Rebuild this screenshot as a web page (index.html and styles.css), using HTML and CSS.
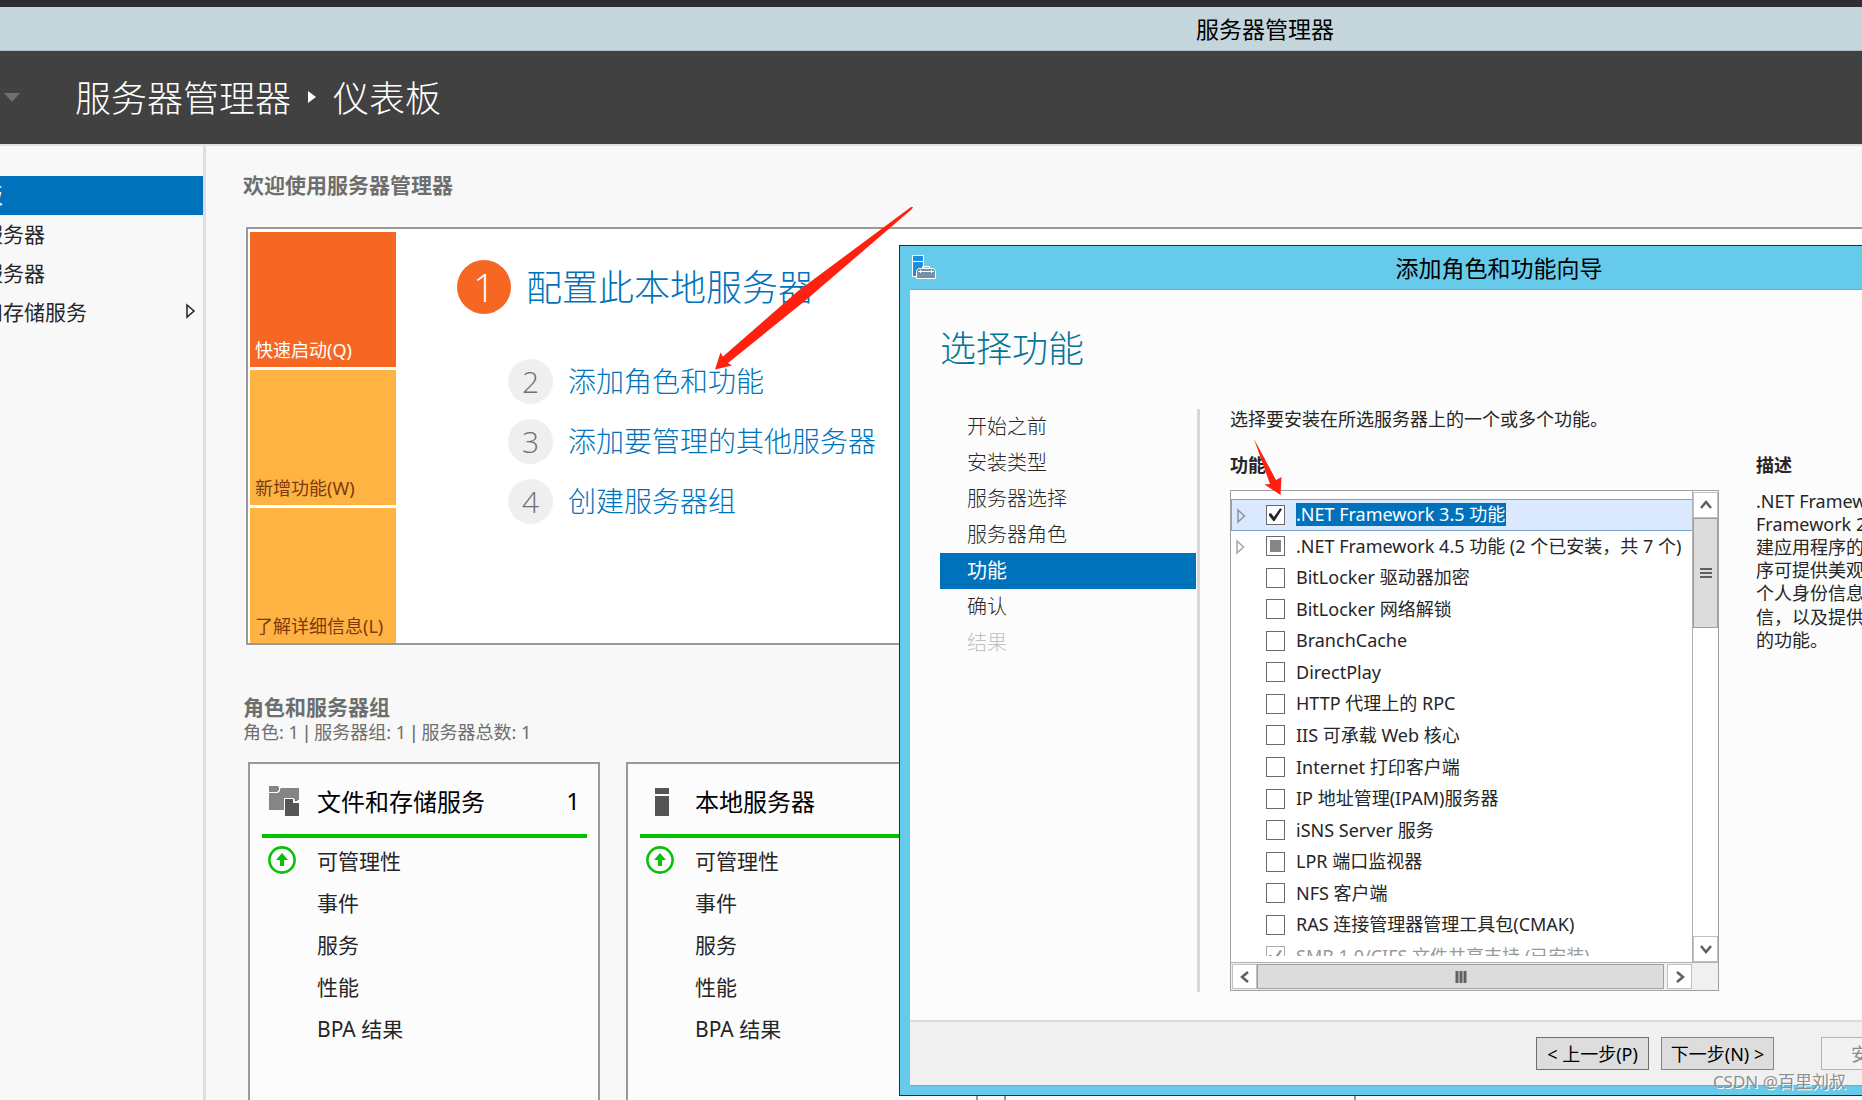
FILE: index.html
```html
<!DOCTYPE html>
<html lang="zh-CN">
<head>
<meta charset="utf-8">
<title>服务器管理器</title>
<link rel="stylesheet" href="styles.css">
</head>
<body>
<div class="desktop">
  <div class="titlebar">服务器管理器</div>
  <header class="banner">
    <svg class="banner-drop" width="16" height="10" viewBox="0 0 16 10"><path d="M0 0h16L8 9z" fill="#707070"/></svg>
    <nav class="crumbs">
      <span>服务器管理器</span>
      <svg width="8" height="14" viewBox="0 0 8 14"><path d="M0 1l8 6-8 6z" fill="#fff"/></svg>
      <span>仪表板</span>
    </nav>
  </header>
  <div class="workspace">
    <nav class="sidebar">
      <ul>
        <li class="current"><a href="#">仪表板</a></li>
        <li><a href="#">本地服务器</a></li>
        <li><a href="#">所有服务器</a></li>
        <li><a href="#">文件和存储服务</a><svg width="10" height="16" viewBox="0 0 10 16"><path d="M1 2l7 6-7 6z" fill="none" stroke="#222" stroke-width="1.5"/></svg></li>
      </ul>
    </nav>
    <main class="main">
      <h2 class="section-title">欢迎使用服务器管理器</h2>
      <section class="welcome">
        <div class="tiles">
          <button class="tile tile-hot">快速启动(Q)</button>
          <button class="tile">新增功能(W)</button>
          <button class="tile">了解详细信息(L)</button>
        </div>
        <div class="steps">
          <div class="step step-main"><span class="num">1</span><a href="#">配置此本地服务器</a></div>
          <div class="step"><span class="num">2</span><a href="#">添加角色和功能</a></div>
          <div class="step"><span class="num">3</span><a href="#">添加要管理的其他服务器</a></div>
          <div class="step"><span class="num">4</span><a href="#">创建服务器组</a></div>
        </div>
      </section>
      <h2 class="section-title groups-title">角色和服务器组</h2>
      <p class="section-sub">角色: 1 <span class="bar">|</span> 服务器组: 1 <span class="bar">|</span> 服务器总数: 1</p>
      <div class="cards">
        <article class="card">
          <div class="card-head">
            <span class="card-icon"><svg width="30" height="30" viewBox="0 0 30 30"><path d="M0 0h9l1 2v2l-2 2H0zM0 7h9l2-2V3l1-1h18v12h-3l-3-2h-9v12H0z" fill="#858585"/><path d="M16 13h8v4h6v13H16z" fill="#555"/><path d="M26 13v2h3z" fill="#555"/></svg></span>
            <h3>文件和存储服务</h3><span class="count">1</span>
          </div>
          <ul>
            <li><span class="ok"><svg width="28" height="28" viewBox="0 0 28 28"><circle cx="14" cy="14" r="12.6" fill="#fff" stroke="#0abf0a" stroke-width="2.6"/><path d="M14 7l6 7h-4v6h-4v-6H8z" fill="#0abf0a"/></svg></span>可管理性</li>
            <li>事件</li><li>服务</li><li>性能</li><li>BPA 结果</li>
          </ul>
        </article>
        <article class="card">
          <div class="card-head">
            <span class="card-icon"><svg width="30" height="30" viewBox="0 0 30 30"><path d="M8 2h14v6H8zM8 10h14v20H8z" fill="#555"/></svg></span>
            <h3>本地服务器</h3>
          </div>
          <ul>
            <li><span class="ok"><svg width="28" height="28" viewBox="0 0 28 28"><circle cx="14" cy="14" r="12.6" fill="#fff" stroke="#0abf0a" stroke-width="2.6"/><path d="M14 7l6 7h-4v6h-4v-6H8z" fill="#0abf0a"/></svg></span>可管理性</li>
            <li>事件</li><li>服务</li><li>性能</li><li>BPA 结果</li>
          </ul>
        </article>
        <article class="card"></article>
      </div>
    </main>
  </div>

  <div class="dialog" role="dialog" aria-label="添加角色和功能向导">
    <div class="dialog-bar">
      <svg class="dialog-icon" width="24" height="24" viewBox="0 0 24 24"><path d="M.5.5h11v21H.5z" fill="#1e8fe0" stroke="#fff"/><path d="M0 6.500h12" stroke="#fff"/><path d="M10.500 13.500v-2h7v2" fill="none" stroke="#fff"/><path d="M4.500 15.500l2-2h15l2 2v8h-19z" fill="#7391aa" stroke="#fff"/><path d="M6 16.500h16M8.500 15v3M19.500 15v3" stroke="#fff"/></svg>
      <span class="dialog-title">添加角色和功能向导</span>
    </div>
    <div class="dialog-body">
      <div class="dialog-content">
        <h1>选择功能</h1>
        <div class="columns">
          <ol class="pages">
            <li>开始之前</li><li>安装类型</li><li>服务器选择</li><li>服务器角色</li>
            <li class="active">功能</li><li>确认</li><li class="off">结果</li>
          </ol>
          <div class="features">
            <p>选择要安装在所选服务器上的一个或多个功能。</p>
            <h4>功能</h4>
            <div class="listbox">
              <div class="view">
                <ul class="rows">
                  <li class="picked"><svg class="exp" width="9" height="16" viewBox="0 0 9 16"><path d="M1 2l6.500 6L1 14z" fill="none" stroke="#8a93a5" stroke-width="1.500"/></svg><input type="checkbox" id="f1" checked><label for="f1">.NET Framework 3.5 功能</label></li>
                  <li><svg class="exp" width="9" height="16" viewBox="0 0 9 16"><path d="M1 2l6.500 6L1 14z" fill="none" stroke="#a6a6a6" stroke-width="1.500"/></svg><input type="checkbox" id="f2" class="partial"><label for="f2">.NET Framework 4.5 功能 (2 个已安装<span class="comma">，</span>共 7 个)</label></li>
                  <li><input type="checkbox" id="f3"><label for="f3">BitLocker 驱动器加密</label></li>
                  <li><input type="checkbox" id="f4"><label for="f4">BitLocker 网络解锁</label></li>
                  <li><input type="checkbox" id="f5"><label for="f5">BranchCache</label></li>
                  <li><input type="checkbox" id="f6"><label for="f6">DirectPlay</label></li>
                  <li><input type="checkbox" id="f7"><label for="f7">HTTP 代理上的 RPC</label></li>
                  <li><input type="checkbox" id="f8"><label for="f8">IIS 可承载 Web 核心</label></li>
                  <li><input type="checkbox" id="f9"><label for="f9">Internet 打印客户端</label></li>
                  <li><input type="checkbox" id="f10"><label for="f10">IP 地址管理(IPAM)服务器</label></li>
                  <li><input type="checkbox" id="f11"><label for="f11">iSNS Server 服务</label></li>
                  <li><input type="checkbox" id="f12"><label for="f12">LPR 端口监视器</label></li>
                  <li><input type="checkbox" id="f13"><label for="f13">NFS 客户端</label></li>
                  <li><input type="checkbox" id="f14"><label for="f14">RAS 连接管理器管理工具包(CMAK)</label></li>
                  <li class="locked"><input type="checkbox" id="f15" checked disabled><label for="f15">SMB 1.0/CIFS 文件共享支持 (已安装)</label></li>
                </ul>
              </div>
              <div class="vbar">
                <button aria-label="向上"><svg width="14" height="10" viewBox="0 0 14 10"><path d="M2 8l5-6 5 6" fill="none" stroke="#606060" stroke-width="2.500"/></svg></button>
                <div class="thumb"><svg width="12" height="12" viewBox="0 0 12 12"><path d="M0 2h12M0 6h12M0 10h12" stroke="#606060" stroke-width="2"/></svg></div>
                <button class="end" aria-label="向下"><svg width="14" height="10" viewBox="0 0 14 10"><path d="M2 2l5 6 5-6" fill="none" stroke="#606060" stroke-width="2.500"/></svg></button>
              </div>
              <div class="hbar">
                <button aria-label="向左"><svg width="10" height="14" viewBox="0 0 10 14"><path d="M8 2L2 7l6 5" fill="none" stroke="#606060" stroke-width="2.500"/></svg></button>
                <div class="thumb"><svg width="12" height="12" viewBox="0 0 12 12"><path d="M2 0v12M6 0v12M10 0v12" stroke="#606060" stroke-width="3"/></svg></div>
                <button aria-label="向右"><svg width="10" height="14" viewBox="0 0 10 14"><path d="M2 2l6 5-6 5" fill="none" stroke="#606060" stroke-width="2.500"/></svg></button>
              </div>
            </div>
          </div>
          <div class="about">
            <h4>描述</h4>
            <p>.NET Framework<br>Framework 2.0<br>建应用程序的<br>序可提供美观<br>个人身份信息<br>信<span class="comma">，</span>以及提供<br>的功能。</p>
          </div>
        </div>
      </div>
      <footer class="dialog-foot">
        <button class="btn">&lt; 上一步(P)</button>
        <button class="btn primary">下一步(N) &gt;</button>
        <button class="btn idle" disabled>安装(I)</button>
      </footer>
    </div>
  </div>

  <svg class="marks" width="1400" height="520" viewBox="0 0 1400 520">
    <path d="M911 207L913 207L912 209L806 300L728 363L732 365.500L715 369.500L720.500 352.500L723 356.500L798 291z" fill="#ff2010"/>
    <path d="M1254 439L1276 480L1281.500 477L1280.500 495L1264.500 484.500L1270 484z" fill="#ff2010"/>
  </svg>
  <div class="watermark">CSDN @百里刘叔</div>
</div>
</body>
</html>
```
FILE: styles.css
```css
* { box-sizing: border-box; margin: 0; padding: 0; }
html, body { height: 100%; }
body { font-family: "Noto Sans", "Noto Sans CJK SC", sans-serif; font-size: 18px; color: #262626; overflow: hidden; }
ul, ol { list-style: none; }
a { color: inherit; text-decoration: none; }
button { font: inherit; color: inherit; }
svg { display: block; flex: none; }

.desktop { position: relative; height: 100vh; overflow: hidden; display: flex; flex-direction: column; background: #f8f8f8; border-top: 7px solid #2e2e2e; }
.titlebar { height: 44px; flex: none; display: flex; justify-content: center; align-items: center; padding: 0 0 2px 668px; background: #c4d6dc; border-bottom: 1px solid #adbcc2; font-size: 23px; color: #000; }
.banner { height: 95px; flex: none; display: flex; align-items: center; background: #414141; border-bottom: 2px solid #e0e0e0; padding-left: 4px; color: #fff; }
.banner-drop { margin-right: 55px; }
.crumbs { display: flex; align-items: center; gap: 17px; padding-bottom: 2px; font-size: 36px; font-weight: 300; }

.workspace { flex: 1; display: flex; min-height: 0; }
.sidebar { width: 206px; flex: none; padding-top: 30px; border-right: 3px solid #dedede; overflow: hidden; }
.sidebar ul { margin-left: -60px; }
.sidebar li { height: 39px; display: flex; align-items: center; justify-content: space-between; padding: 0 7px 3px 0; font-size: 21px; }
.sidebar .current { background: #0072bc; color: #fff; }

.main { flex: 1; min-width: 0; padding: 24px 0 0 37px; }
.section-title { font-size: 21px; line-height: 30px; font-weight: 700; color: #6e6e6e; }
.welcome { margin: 27px 0 0 3px; height: 418px; border: 2px solid #999; border-right: 0; background: #fff; padding: 3px 1px 0 2px; display: flex; }
.tiles { width: 146px; display: flex; flex-direction: column; gap: 3px; }
.tile { height: 135px; border: 0; background: #ffb342; color: #7d3a10; display: flex; align-items: flex-end; padding: 0 5px 4px; text-align: left; font-size: 18px; line-height: 26px; white-space: nowrap; }
.tile-hot { background: #f56723; color: #fff; }
.steps { padding: 28px 0 0 61px; font-weight: 300; color: #0072bc; }
.step { display: flex; align-items: center; gap: 15px; height: 60px; padding-left: 51px; font-size: 28px; }
.step a { padding-bottom: 3px; }
.num { width: 45px; height: 45px; border-radius: 50%; background: #efefef; color: #707070; display: flex; align-items: center; justify-content: center; font-family: "Open Sans", sans-serif; font-size: 30px; line-height: 45px; }
.step-main { height: 54px; margin-bottom: 37px; padding-left: 0; font-size: 36px; }
.step-main .num { width: 54px; height: 54px; background: #f56723; color: #fff; font-size: 38px; line-height: 54px; }

.groups-title { margin-top: 47px; }
.section-sub { font-size: 18px; line-height: 20px; color: #6e6e6e; }
.bar { font-family: "DejaVu Sans", sans-serif; }
.cards { display: flex; gap: 26px; margin: 19px 0 0 5px; }
.card { width: 352px; flex: none; height: 400px; border: 2px solid #999; background: #fcfcfc; padding: 0 11px 0 12px; }
.card-head { height: 74px; display: flex; align-items: center; border-bottom: 4px solid #00c400; padding: 3px 7px 0; color: #000; }
.card-head h3 { flex: 1; font-size: 24px; font-weight: 400; }
.card-head .count { font-size: 24px; }
.card-icon { width: 48px; }
.card li { height: 42px; display: flex; align-items: center; padding-left: 55px; font-size: 21px; }
.card ul { padding-top: 1px; }
.ok { width: 49px; margin-left: -49px; }

.dialog { position: absolute; left: 899px; top: 238px; width: 1200px; height: 851px; border: 1px solid #2b2b2b; background: #66caeb; padding: 0 10px 9px; display: flex; flex-direction: column; }
.dialog-bar { height: 43px; flex: none; display: flex; align-items: center; padding: 0 0 2px 2px; color: #000; }
.dialog-title { flex: 1; text-align: center; font-size: 23px; padding-right: 26px; }
.dialog-body { flex: 1; min-height: 0; display: flex; flex-direction: column; border: solid #7ba6bb; border-width: 1px 0; background: #fcfcfc; }
.dialog-content { flex: 1; padding: 32px 30px 0; }
.dialog h1 { font-size: 36px; line-height: 54px; font-weight: 300; color: #00759a; }
.columns { display: flex; margin-top: 33px; }
.pages { width: 260px; height: 583px; flex: none; border-right: 3px solid #d8d8d8; font-weight: 300; }
.pages li { height: 36px; width: 256px; padding-left: 27px; line-height: 36px; font-size: 20px; }
.pages .active { background: #0072bc; color: #fff; font-weight: 400; }
.pages .off { color: #c0c0c0; }
.features { width: 489px; margin-left: 30px; flex: none; }
.features p { line-height: 20px; white-space: nowrap; }
.features h4 { margin: 25px 0 14px; line-height: 22px; font-size: 18px; }
.listbox { height: 501px; border: 1px solid #a0a0a0; background: #fff; display: grid; grid-template: 1fr 28px / 1fr 26px; }
.view { height: 465px; padding-top: 8px; overflow: hidden; }
.rows { height: 473px; display: grid; grid-template-rows: repeat(15, 1fr); }
.rows li { position: relative; display: flex; align-items: center; padding-left: 35px; gap: 8px; white-space: nowrap; }
.exp { position: absolute; left: 5px; top: 8px; }
.rows .picked { background: #dbe9fe; border: 1px solid #7da2ce; border-right: 0; padding-left: 34px; }
.picked label { background: #0072bc; color: #fff; }
.rows label { padding-right: 1px; line-height: 23px; margin-left: 3px; }
.comma { font-family: "Noto Sans CJK TC", sans-serif; }
.rows input { appearance: none; width: 19px; height: 20px; border: 1px solid #6a6a6a; background: #fff; display: grid; place-items: center; }
.rows input:checked::before { content: ""; width: 13px; height: 13px; background: #222; clip-path: polygon(0 40%, 18% 40%, 38% 68%, 85% 0, 100% 8%, 42% 100%, 34% 100%, 0 56%); }
.rows input.partial::before { content: ""; width: 11px; height: 12px; background: #858585; }
.locked { color: #999; }
.rows .locked input { border-color: #aaa; }
.rows .locked input::before { background: #999; }
.vbar { border-left: 1px solid #b0b0b0; padding-top: 1px; display: flex; flex-direction: column; }
.vbar button { height: 26px; }
.vbar .end { margin-top: auto; }
.vbar button, .hbar button, .thumb { border: 1px solid #c0c0c0; background: #fff; display: flex; align-items: center; justify-content: center; }
.listbox .thumb { background: #dcdcdc; border-color: #a0a0a0; }
.vbar .thumb { height: 110px; }
.hbar { border-top: 1px solid #b0b0b0; grid-column: 1 / 3; display: flex; padding: 1px 26px 1px 1px; background: #f0f0f0; }
.hbar button { width: 25px; }
.hbar .thumb { flex: 1; margin-right: 3px; }
.about { margin-left: 37px; flex: 1; white-space: nowrap; }
.about h4 { margin-top: 45px; line-height: 22px; font-size: 18px; }
.about p { margin-top: 14px; line-height: 23px; }
.dialog-foot { height: 65px; flex: none; display: flex; align-items: center; gap: 12px; background: #f0f0f0; border-top: 2px solid #dcdcdc; padding-left: 626px; }
.btn { width: 113px; height: 33px; border: 1px solid #707070; background: #dddddd; color: #000; font-size: 18px; line-height: 24px; white-space: nowrap; }
.primary { border-color: #3399ff; }
.idle { margin-left: 35px; background: #f2f2f2; border-color: #b5b5b5; color: #8c8c8c; }

.marks { position: absolute; left: 0; top: -7px; pointer-events: none; }
.watermark { position: absolute; right: 16px; bottom: 6px; font-size: 17px; line-height: 24px; color: #8f8f8f; text-shadow: 1px 1px 0 #fff; }
```
